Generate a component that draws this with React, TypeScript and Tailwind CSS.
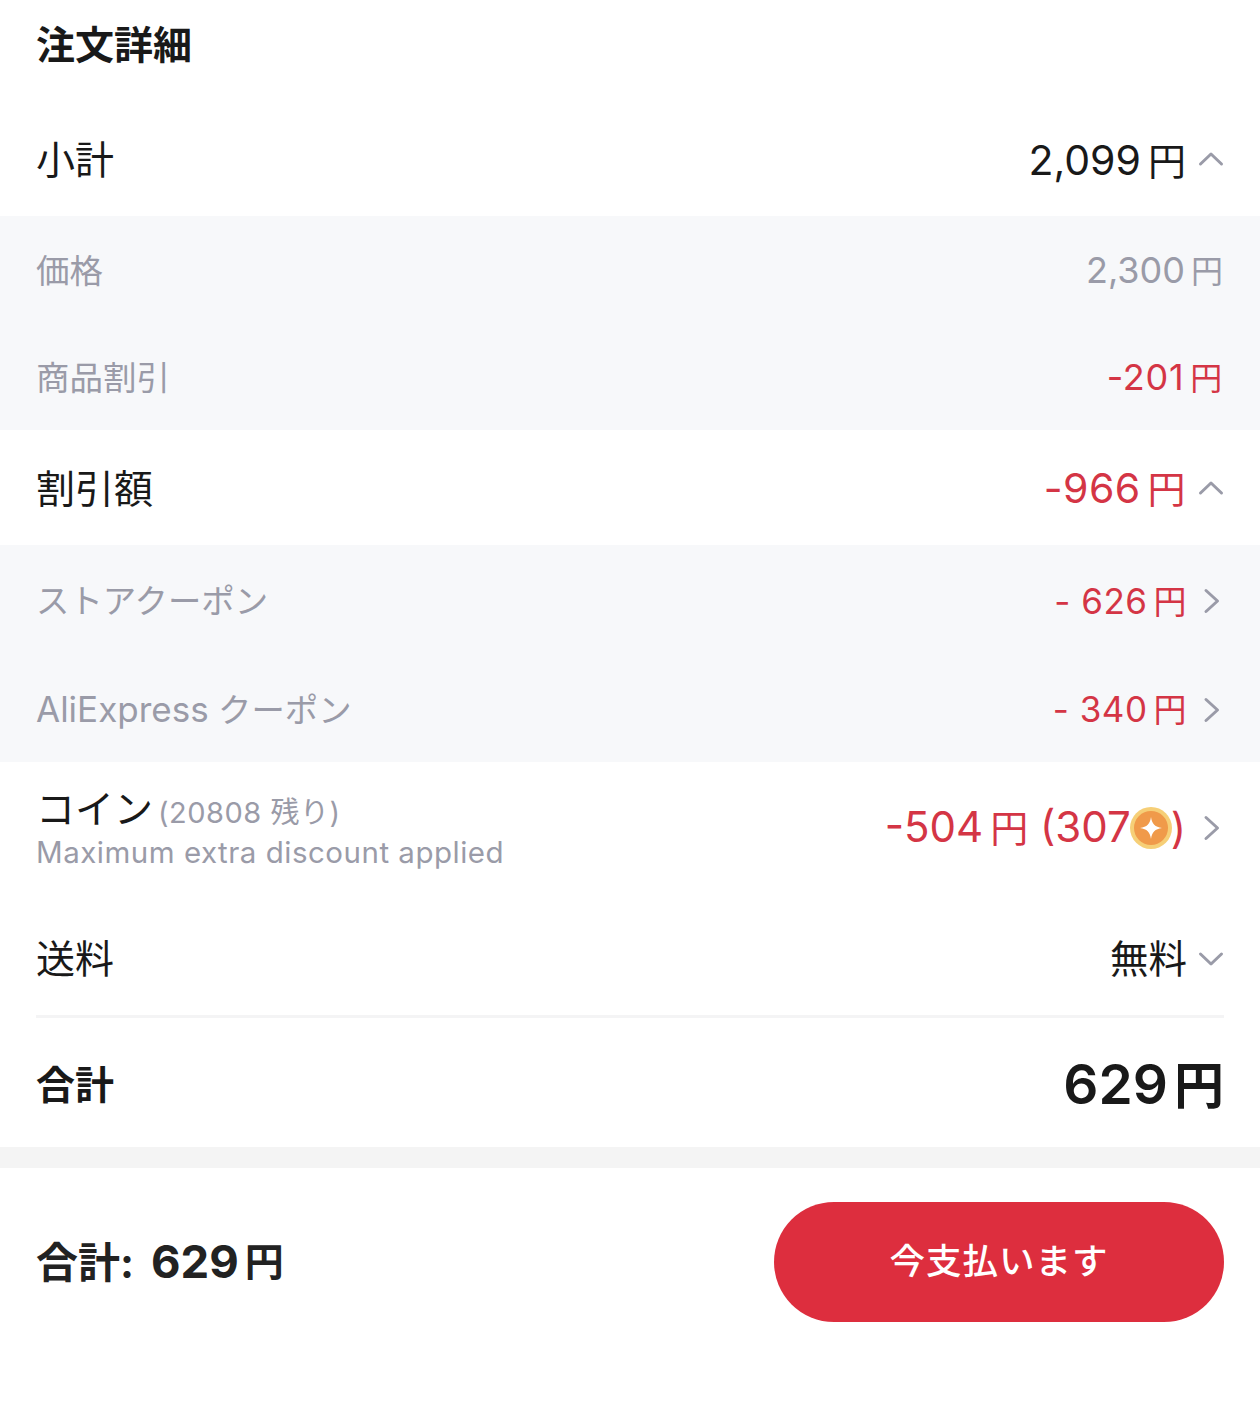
import React from "react";

const font = { fontFamily: '"Inter","Noto Sans CJK JP",sans-serif' };

function Up() {
  return (
    <svg width="26" height="26" viewBox="0 0 26 26" fill="none" className="shrink-0 -mt-[2px]">
      <path d="M2.5 18 L13 8 L23.5 18" stroke="#9a9ba8" strokeWidth="3" strokeLinecap="round" strokeLinejoin="round" />
    </svg>
  );
}
function Down() {
  return (
    <svg width="26" height="26" viewBox="0 0 26 26" fill="none" className="shrink-0">
      <path d="M2.5 8 L13 18 L23.5 8" stroke="#9a9ba8" strokeWidth="3" strokeLinecap="round" strokeLinejoin="round" />
    </svg>
  );
}
function Right() {
  return (
    <svg width="26" height="26" viewBox="0 0 26 26" fill="none" className="shrink-0">
      <path d="M8 2.5 L19.5 13 L8 23.5" stroke="#9a9ba8" strokeWidth="3" strokeLinecap="round" strokeLinejoin="round" />
    </svg>
  );
}
function Coin() {
  return (
    <svg width="42" height="42" viewBox="0 0 42 42" className="shrink-0 -mx-[1px]">
      <circle cx="21" cy="21" r="21" fill="#f6cf77" />
      <circle cx="21" cy="21" r="17" fill="#f09a4a" />
      <path d="M21 10 C22 17 25 20 32 21 C25 22 22 25 21 32 C20 25 17 22 10 21 C17 20 20 17 21 10 Z" fill="#fff" />
    </svg>
  );
}

export default function App() {
  return (
    <div className="w-[1260px] h-[1414px] bg-white text-[#191919] overflow-hidden" style={font}>
      <div className="h-[108px] px-9 pt-[19px]">
        <h1 className="text-[39px] leading-[52px] font-bold">注文詳細</h1>
      </div>

      <div className="h-[108px] px-9 pb-[4px] flex items-center justify-between">
        <span className="text-[39px] leading-[52px]">小計</span>
        <span className="flex items-center gap-[12px]">
          <span className="text-[41px] leading-[52px]">2,099<span className="text-[38px] ml-[7px]">円</span></span>
          <Up />
        </span>
      </div>

      <div className="bg-[#f7f8fa] h-[214px] flex flex-col text-[#9a9ba8] text-[36px] leading-[48px]">
        <div className="h-[107px] px-9 pr-[37px] pt-[3px] flex items-center justify-between">
          <span className="text-[33.5px]">価格</span>
          <span>2,300<span className="text-[32px] ml-[6px]">円</span></span>
        </div>
        <div className="h-[107px] px-9 pr-[37px] pt-[3px] flex items-center justify-between">
          <span className="text-[33.5px]">商品割引</span>
          <span className="text-[#d43545] tracking-[0.7px]">-201<span className="text-[32px] ml-[6px]">円</span></span>
        </div>
      </div>

      <div className="h-[115px] px-9 pt-[2px] flex items-center justify-between">
        <span className="text-[39px] leading-[52px]">割引額</span>
        <span className="flex items-center gap-[12px]">
          <span className="text-[41px] leading-[52px] text-[#d43545] tracking-[0.4px]">-966<span className="text-[38px] ml-[7px]">円</span></span>
          <Up />
        </span>
      </div>

      <div className="bg-[#f7f8fa] h-[217px] flex flex-col text-[#9a9ba8] text-[35px] leading-[48px]">
        <div className="h-[110px] px-9 pt-[2px] flex items-center justify-between">
          <span className="text-[33.4px]">ストアクーポン</span>
          <span className="flex items-center gap-[11px]">
            <span className="text-[#d43545] tracking-[0.5px]">- 626<span className="text-[33px] ml-[6px]">円</span></span>
            <Right />
          </span>
        </div>
        <div className="h-[107px] px-9 pt-[2px] flex items-center justify-between">
          <span className="text-[33.4px]"><span className="text-[35px]">AliExpress</span> クーポン</span>
          <span className="flex items-center gap-[11px]">
            <span className="text-[#d43545] tracking-[0.5px]">- 340<span className="text-[33px] ml-[6px]">円</span></span>
            <Right />
          </span>
        </div>
      </div>

      <div className="h-[131px] px-9 flex items-center justify-between">
        <div className="flex flex-col">
          <div className="flex items-baseline gap-[5px]">
            <span className="text-[39px] leading-[48px]">コイン</span>
            <span className="text-[29px] leading-[40px] text-[#9a9ba8] tracking-[0.5px]">(20808 残り)</span>
          </div>
          <span className="text-[29.5px] leading-[38px] text-[#9a9ba8] tracking-[0.5px]">Maximum extra discount applied</span>
        </div>
        <span className="flex items-center gap-[12px]">
          <span className="flex items-center text-[42px] leading-[52px] text-[#d43545]">
            <span>-504<span className="text-[38px] ml-[7px]">円</span> (307</span>
            <Coin />
            <span>)</span>
          </span>
          <Right />
        </span>
      </div>

      <div className="h-[125px] mx-9 border-b-[3px] border-[#f4f4f5] flex items-center justify-between pt-[10px]">
        <span className="text-[39px] leading-[52px]">送料</span>
        <span className="flex items-center gap-[11px]">
          <span className="text-[38.5px] leading-[52px]">無料</span>
          <Down />
        </span>
      </div>

      <div className="h-[129px] px-9 pt-[5px] flex items-center justify-between">
        <span className="text-[39px] leading-[52px] font-semibold -mt-[1px]">合計</span>
        <span className="text-[55px] leading-[64px] font-semibold">629<span className="text-[50px] ml-[6px]">円</span></span>
      </div>

      <div className="h-[21px] bg-[#f4f4f4]" />

      <div className="h-[246px] px-9 pt-[34px] flex items-start justify-between">
        <span className="h-[120px] flex items-center text-[42px] font-bold text-[#222222]">
          <span>合計:</span>
          <span className="text-[45.5px] ml-[17px]">629</span>
          <span className="text-[39px] font-semibold ml-[6px]">円</span>
        </span>
        <button className="w-[450px] h-[120px] rounded-[60px] bg-[#dd2e3e] text-white text-[35.5px] font-medium tracking-[1px]">今支払います</button>
      </div>
    </div>
  );
}
